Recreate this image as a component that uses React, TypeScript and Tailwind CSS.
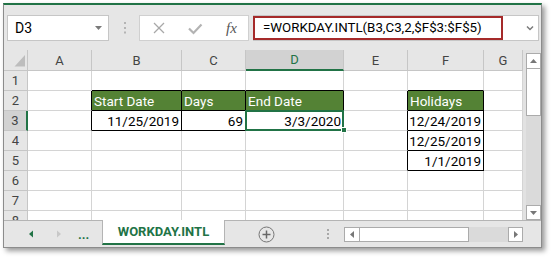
import React from "react";

const COLS = ["A", "B", "C", "D", "E", "F", "G"] as const;
const ROWS = [1, 2, 3, 4, 5, 6, 7, 8];

type CellData = { t: string; right?: boolean; green?: boolean };

const DATA: Record<string, CellData> = {
  B2: { t: "Start Date", green: true },
  C2: { t: "Days", green: true },
  D2: { t: "End Date", green: true },
  F2: { t: "Holidays", green: true },
  B3: { t: "11/25/2019", right: true },
  C3: { t: "69", right: true },
  D3: { t: "3/3/2020", right: true },
  F3: { t: "12/24/2019", right: true },
  F4: { t: "12/25/2019", right: true },
  F5: { t: "1/1/2019", right: true },
};

function rightBlack(c: string, r: number) {
  if ((c === "A" || c === "B" || c === "C" || c === "D") && (r === 2 || r === 3)) return true;
  if ((c === "E" || c === "F") && r >= 2 && r <= 5) return true;
  return false;
}
function bottomBlack(c: string, r: number) {
  if ((c === "B" || c === "C" || c === "D") && r >= 1 && r <= 3) return true;
  if (c === "F" && r >= 1 && r <= 5) return true;
  return false;
}

function Toolbar() {
  return (
    <div className="h-[45px] flex items-start pt-[10px] pl-[3px]">
      {/* Name box */}
      <div className="w-[102px] h-[26px] bg-white border border-[#c6c6c6] flex items-center justify-between pl-[7px] pr-[6px]">
        <span className="text-[14px] text-black leading-none">D3</span>
        <svg width="7" height="4" viewBox="0 0 7 4">
          <polygon points="0,0 7,0 3.5,4" fill="#7a7a7a" />
        </svg>
      </div>
      {/* dots */}
      <svg className="ml-[15px]" width="2" height="26" viewBox="0 0 2 26">
        <rect x="0" y="7" width="2" height="2" fill="#b4b4b4" />
        <rect x="0" y="12" width="2" height="2" fill="#b4b4b4" />
        <rect x="0" y="16.5" width="2" height="2" fill="#b4b4b4" />
      </svg>
      {/* fx box */}
      <div className="ml-[13px] w-[110px] h-[26px] bg-white border border-[#d0d0d0] flex items-center">
        <svg className="ml-[13px]" width="12" height="12" viewBox="0 0 12 12">
          <line x1="1" y1="1" x2="11" y2="11" stroke="#a8a8a8" strokeWidth="1.3" />
          <line x1="11" y1="1" x2="1" y2="11" stroke="#a8a8a8" strokeWidth="1.3" />
        </svg>
        <svg className="ml-[23px] mt-[2px]" width="15" height="12" viewBox="0 0 15 12">
          <polyline points="1,5.5 5.5,10 13.5,1.5" fill="none" stroke="#b3b3b3" strokeWidth="2.2" />
        </svg>
        <span className="ml-[23px] font-['Liberation_Serif',serif] italic text-[15px] text-[#555] leading-none">
          fx
        </span>
      </div>
      {/* formula box */}
      <div className="relative ml-[4px] w-[286px] h-[26px] bg-white border border-[#c6c6c6] flex items-center justify-between pl-[9px] pr-[4px]">
        <span className="text-[13.3px] text-black leading-none whitespace-nowrap">
          =WORKDAY.INTL(B3,C3,2,$F$3:$F$5)
        </span>
        <svg width="8" height="6" viewBox="0 0 8 6">
          <polyline points="1,1.5 4,4.5 7,1.5" fill="none" stroke="#7a7a7a" strokeWidth="1.5" />
        </svg>
        <div className="absolute -left-px top-0 w-[250px] h-[24px] border-2 border-[#a52a2a] pointer-events-none" />
      </div>
    </div>
  );
}

function Sheet() {
  const cells: React.ReactNode[] = [];
  cells.push(
    <div key="corner" className="bg-[#e6e6e6] border-r border-b border-[#c6c6c6] flex items-start">
      <svg width="23" height="20" viewBox="0 0 23 20">
        <polygon points="10.5,16.5 21,5 21,16.5" fill="#bdbdbd" />
      </svg>
    </div>
  );
  COLS.forEach((c) => {
    const sel = c === "D";
    cells.push(
      <div
        key={"h" + c}
        className={`flex items-center justify-center border-r border-[#c6c6c6] text-[13px] leading-none ${
          sel
            ? "bg-[#d2d2d2] text-[#217346] border-b-2 border-b-[#217346]"
            : "bg-[#e6e6e6] text-[#444] border-b border-b-[#c6c6c6]"
        }`}
      >
        {c}
      </div>
    );
  });
  ROWS.forEach((r) => {
    const sel = r === 3;
    cells.push(
      <div
        key={"r" + r}
        className={`flex items-center justify-center border-b border-b-[#c6c6c6] text-[13px] leading-none ${
          sel
            ? "bg-[#d2d2d2] text-[#444] border-r-2 border-r-[#217346]"
            : "bg-[#e6e6e6] text-[#444] border-r border-r-[#c6c6c6]"
        }`}
      >
        {r}
      </div>
    );
    COLS.forEach((c) => {
      const id = c + r;
      const d = DATA[id];
      const rb = rightBlack(c, r) ? "border-r-black" : "border-r-[#d4d4d4]";
      const bb = bottomBlack(c, r) ? "border-b-black" : "border-b-[#d4d4d4]";
      const fill = d?.green ? "bg-[#548235] text-white" : "bg-white text-black";
      const align = d?.right ? "justify-end" : "justify-start";
      const isSel = id === "D3";
      cells.push(
        <div
          key={id}
          className={`flex items-end pb-[2px] px-[2px] border-r border-b whitespace-nowrap text-[13.5px] leading-none ${rb} ${bb} ${fill} ${align} ${
            isSel ? "relative" : ""
          }`}
        >
          {d ? <span>{d.t}</span> : null}
          {isSel ? (
            <>
              <div className="absolute -left-px -top-px w-[99px] h-[21px] border-2 border-[#217346] z-10 pointer-events-none" />
              <div className="absolute left-[95px] top-[16px] w-[6px] h-[6px] bg-[#217346] border border-white z-20" />
            </>
          ) : null}
        </div>
      );
    });
  });
  return (
    <div className="grid grid-cols-[24px_64px_90px_64px_98px_64px_76px_39px] grid-rows-[21px_repeat(8,20px)] w-[519px] h-[170px] overflow-hidden bg-white">
      {cells}
    </div>
  );
}

function VScroll() {
  return (
    <div className="w-[18px] h-[170px] bg-[#e2e2e2] pl-[3px] flex flex-col">
      <div className="mt-[3px] w-[15px] h-[16px] bg-white border border-[#ababab] flex items-center justify-center">
        <svg width="7" height="4" viewBox="0 0 7 4">
          <polygon points="0,4 7,4 3.5,0" fill="#777" />
        </svg>
      </div>
      <div className="w-[15px] h-[47px] bg-white border-x border-b border-[#ababab]" />
      <div className="w-[15px] h-[89px] bg-[#dadada]" />
      <div className="w-[15px] h-[15px] bg-white border border-[#ababab] flex items-center justify-center">
        <svg width="7" height="4" viewBox="0 0 7 4">
          <polygon points="0,0 7,0 3.5,4" fill="#777" />
        </svg>
      </div>
    </div>
  );
}

function TabBar() {
  return (
    <div className="h-[27px] border-t border-[#b4b4b4] flex items-start">
      <svg className="shrink-0" width="74" height="26" viewBox="0 0 74 26">
        <polygon points="25,13 29,9.5 29,16.5" fill="#217346" />
        <polygon points="57,13 53,9.5 53,16.5" fill="#c8c8c8" />
      </svg>
      <span className="w-[24px] text-[13px] font-bold text-[#217346] leading-[23px] pt-[2px]">...</span>
      <div className="-mt-px w-[123px] h-[25px] bg-white border-x border-[#b4b4b4] border-b-2 border-b-[#217346] flex items-start justify-center">
        <span className="text-[13px] font-bold text-[#217346] leading-[23px] whitespace-nowrap">WORKDAY.INTL</span>
      </div>
      <svg className="ml-[33px] mt-[5px]" width="17" height="17" viewBox="0 0 17 17">
        <circle cx="8.5" cy="8.5" r="7.5" fill="none" stroke="#777" strokeWidth="1" />
        <line x1="4.5" y1="8.5" x2="12.5" y2="8.5" stroke="#666" strokeWidth="1.5" />
        <line x1="8.5" y1="4.5" x2="8.5" y2="12.5" stroke="#666" strokeWidth="1.5" />
      </svg>
      <svg className="ml-[52px] mt-[8px]" width="3" height="12" viewBox="0 0 3 12">
        <rect x="0" y="0" width="2" height="2" fill="#a8a8a8" />
        <rect x="0" y="4" width="2" height="2" fill="#a8a8a8" />
        <rect x="0" y="8" width="2" height="2" fill="#a8a8a8" />
      </svg>
      <div className="ml-[14px] mt-[6px] w-[179px] h-[15px] flex">
        <div className="w-[16px] h-[15px] bg-white border border-[#ababab] flex items-center justify-center">
          <svg width="4" height="7" viewBox="0 0 4 7">
            <polygon points="4,0 4,7 0,3.5" fill="#777" />
          </svg>
        </div>
        <div className="w-[109px] h-[15px] bg-white border-y border-r border-[#ababab]" />
        <div className="w-[39px] h-[15px] bg-[#dadada]" />
        <div className="w-[15px] h-[15px] bg-white border border-[#ababab] flex items-center justify-center">
          <svg width="4" height="7" viewBox="0 0 4 7">
            <polygon points="0,0 0,7 4,3.5" fill="#777" />
          </svg>
        </div>
      </div>
    </div>
  );
}

export default function App() {
  return (
    <div className="w-[552px] h-[258px] bg-white pl-[3px] pt-[3px] font-['Roboto',sans-serif]">
      <div className="w-[539px] h-[245px] flex flex-col bg-[#e6e6e6] border-t-2 border-t-[#217346] border-x border-b border-x-[#8c8c8c] border-b-[#8c8c8c] shadow-[3px_3px_5px_rgba(0,0,0,0.4)]">
        <Toolbar />
        <div className="flex h-[170px]">
          <Sheet />
          <VScroll />
        </div>
        <TabBar />
      </div>
    </div>
  );
}
